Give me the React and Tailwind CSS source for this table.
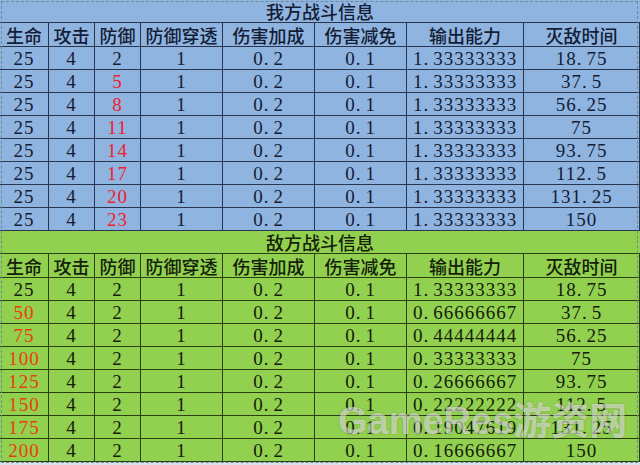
import React from "react";

const COLS = "grid grid-cols-[49px_46px_46px_82px_92px_92px_117px_1fr]";
const HEAD = ["生命", "攻击", "防御", "防御穿透", "伤害加成", "伤害减免", "输出能力", "灭敌时间"];

function N({ v }) {
  const s = String(v);
  const i = s.indexOf(".");
  if (i < 0) return <>{s}</>;
  return (
    <>
      {s.slice(0, i)}
      <span className="mr-[4px]">.</span>
      {s.slice(i + 1)}
    </>
  );
}

const times = ["18.75", "37.5", "56.25", "75", "93.75", "112.5", "131.25", "150"];

const blueRows = [2, 5, 8, 11, 14, 17, 20, 23].map((d, i) => ({
  hp: "25",
  hpRed: false,
  def: String(d),
  defRed: i > 0,
  out: "1.33333333",
  t: times[i],
}));

const greenOut = [
  "1.33333333",
  "0.66666667",
  "0.44444444",
  "0.33333333",
  "0.26666667",
  "0.22222222",
  "0.19047619",
  "0.16666667",
];
const greenRows = [25, 50, 75, 100, 125, 150, 175, 200].map((h, i) => ({
  hp: String(h),
  hpRed: i > 0,
  def: "2",
  defRed: false,
  out: greenOut[i],
  t: times[i],
}));

function Section({ title, rows, blue }) {
  const bg = blue ? "bg-[#8fb4e0]" : "bg-[#92d050]";
  const line = blue ? "border-[#2a3550]" : "border-[#2b3f14]";
  const txt = blue ? "text-[#141c36]" : "text-[#14200a]";
  const red = blue ? "text-[#f0202e]" : "text-[#e8400c]";
  const cell = `flex items-center justify-center border-r border-b ${line}`;
  const num = "font-['Liberation_Serif',serif] text-[19px] tracking-[1px] leading-none";
  return (
    <div className={`${bg} ${txt}`}>
      <div
        className={`h-[23px] border-b ${line} flex items-center justify-center font-['Noto_Sans_CJK_SC',sans-serif] text-[18px] font-medium leading-none`}
      >
        {title}
      </div>
      <div className={`${COLS} h-[24px]`}>
        {HEAD.map((h) => (
          <div
            key={h}
            className={`${cell} font-['Noto_Sans_CJK_SC',sans-serif] text-[18px] font-medium leading-none whitespace-nowrap`}
          >
            {h}
          </div>
        ))}
      </div>
      {rows.map((r, i) => (
        <div key={i} className={`${COLS} h-[23px]`}>
          <div className={`${cell} ${num} ${r.hpRed ? red : ""}`}>
            <N v={r.hp} />
          </div>
          <div className={`${cell} ${num}`}>4</div>
          <div className={`${cell} ${num} ${r.defRed ? red : ""}`}>
            <N v={r.def} />
          </div>
          <div className={`${cell} ${num}`}>1</div>
          <div className={`${cell} ${num}`}>
            <N v="0.2" />
          </div>
          <div className={`${cell} ${num}`}>
            <N v="0.1" />
          </div>
          <div className={`${cell} ${num}`}>
            <N v={r.out} />
          </div>
          <div className={`${cell} ${num}`}>
            <N v={r.t} />
          </div>
        </div>
      ))}
    </div>
  );
}

export default function App() {
  return (
    <div className="relative w-[640px] h-[465px] overflow-hidden bg-[#d8e0e8]">
      <Section title="我方战斗信息" rows={blueRows} blue />
      <Section title="敌方战斗信息" rows={greenRows} blue={false} />
      <div className="pointer-events-none absolute left-[1px] top-[1px] w-[637px] h-[462px] border border-dashed border-[#6a8c96]" />
      <div className="pointer-events-none absolute left-[338px] top-[402px] whitespace-nowrap font-['Liberation_Sans','Noto_Sans_CJK_SC',sans-serif] text-[38px] font-bold leading-none text-white/50 [text-shadow:0_0_2px_rgba(60,60,60,0.35)]">
        GameRes游资网
      </div>
    </div>
  );
}
